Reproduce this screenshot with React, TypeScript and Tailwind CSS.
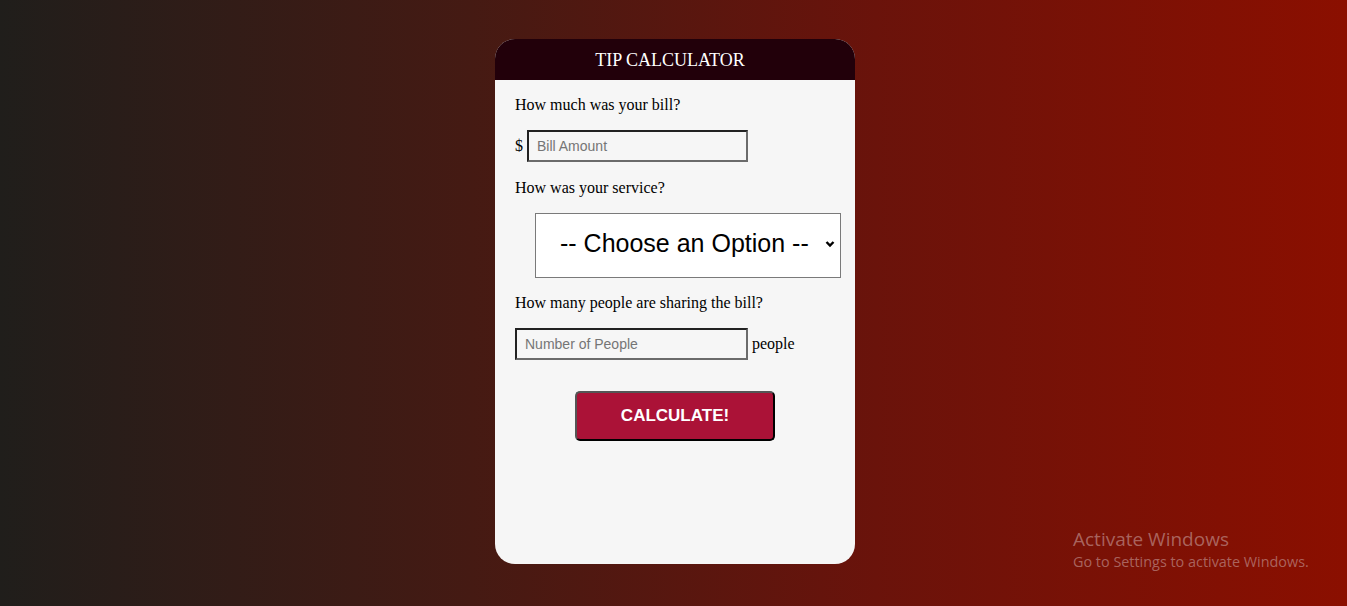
import React from "react";

const App: React.FC = () => {
  return (
    <div className="relative h-[606px] w-full overflow-hidden bg-[linear-gradient(to_right,#201e1b_0%,#451a13_35%,#6a130b_65%,#8b0f00_100%)] font-['Liberation_Serif',serif]">
      <div className="flex justify-center pl-[3px] pt-[39px]">
        {/* Card */}
        <div className="flex h-[525px] w-[360px] flex-col overflow-hidden rounded-[20px] bg-[#f6f6f6]">
          {/* Header */}
          <div className="flex h-[41px] items-center justify-center bg-[#22000a] pr-[10px]">
            <h1 className="text-[18px] leading-none text-white">TIP CALCULATOR</h1>
          </div>

          {/* Body */}
          <div className="flex flex-col px-5 pt-4 text-[16px] text-black">
            <p className="leading-[18px]">How much was your bill?</p>

            <div className="mt-4 flex items-center gap-[4px]">
              <span>$</span>
              <input
                type="text"
                placeholder="Bill Amount"
                className="h-[32px] w-[221px] border-2 border-t-[#222] border-l-[#222] border-b-[#6b6b6b] border-r-[#6b6b6b] px-2 pb-[1px] font-['Liberation_Sans',sans-serif] text-[14px] placeholder:text-[#757575]"
              />
            </div>

            <p className="mt-[17px] leading-[18px]">How was your service?</p>

            <div className="relative mt-4 ml-5 h-[65px] w-[306px]">
              <select className="h-full w-full appearance-none border border-[#7a7a7a] bg-white pb-[4px] pl-[24px] font-['Liberation_Sans',sans-serif] text-[25px] text-black">
                <option>-- Choose an Option --</option>
                <option>30% - Outstanding</option>
                <option>20% - Good</option>
                <option>15% - It was OK</option>
                <option>10% - Bad</option>
                <option>5% - Terrible</option>
              </select>
              <svg
                className="pointer-events-none absolute right-[6px] top-[27px]"
                width="10"
                height="8"
                viewBox="0 0 10 8"
              >
                <path d="M1.5 2 L5 5.5 L8.5 2" fill="none" stroke="#000" strokeWidth="2.4" />
              </svg>
            </div>

            <p className="mt-4 leading-[18px]">How many people are sharing the bill?</p>

            <div className="mt-4 flex items-center gap-[4px]">
              <input
                type="text"
                placeholder="Number of People"
                className="h-[32px] w-[233px] border-2 border-t-[#222] border-l-[#222] border-b-[#6b6b6b] border-r-[#6b6b6b] px-2 pb-[1px] font-['Liberation_Sans',sans-serif] text-[14px] placeholder:text-[#757575]"
              />
              <span>people</span>
            </div>

            <div className="mt-[31px] flex justify-center">
              <button className="h-[50px] w-[200px] rounded-[5px] border-2 border-t-[#555] border-l-[#555] border-b-black border-r-black bg-[#ab1237] font-['Liberation_Sans',sans-serif] text-[17px] font-bold text-white">
                CALCULATE!
              </button>
            </div>
          </div>
        </div>
      </div>

      {/* OS watermark */}
      <div className="pointer-events-none absolute left-[1073px] top-[527px] font-['Open_Sans',sans-serif] text-[#b57a76]/80">
        <div className="text-[19px] leading-[25px]">Activate Windows</div>
        <div className="text-[14.4px] leading-[20px]">Go to Settings to activate Windows.</div>
      </div>
    </div>
  );
};

export default App;
